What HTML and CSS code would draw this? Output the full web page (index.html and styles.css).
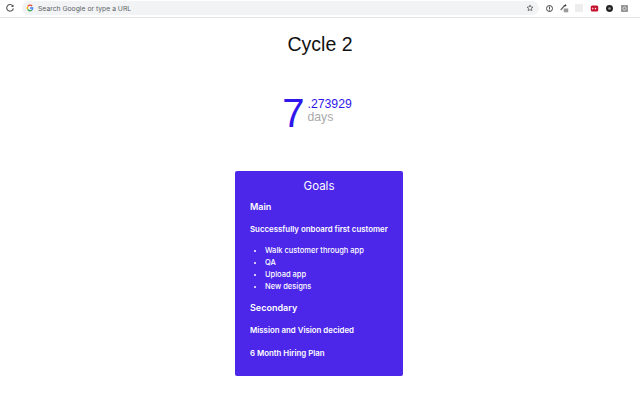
FILE: index.html
```html
<!DOCTYPE html>
<html lang="en">
<head>
<meta charset="UTF-8" />
<title>Cycle 2</title>
<link rel="stylesheet" href="styles.css">
</head>
<body>

<div class="toolbar">
  <svg class="reload" viewBox="0 0 12 12" xmlns="http://www.w3.org/2000/svg">
    <path d="M9.6 4 A4 4 0 1 0 10 6.4" />
    <path class="solid" d="M10.2 1.8 V4.8 H7.2 Z" />
  </svg>
  <div class="omnibox">
    <svg class="glogo" viewBox="0 0 12 12" xmlns="http://www.w3.org/2000/svg">
      <path stroke="#ea4335" d="M9.2 3 A4 4 0 0 0 2.6 3.8" />
      <path stroke="#fbbc05" d="M2.6 3.8 A4 4 0 0 0 2.6 8.2" />
      <path stroke="#34a853" d="M2.6 8.2 A4 4 0 0 0 9 8.8" />
      <path stroke="#4285f4" d="M9 8.8 A4 4 0 0 0 10 6 H6" />
    </svg>
    <span class="omnibox-text">Search Google or type a URL</span>
    <svg class="star" viewBox="0 0 12 12" xmlns="http://www.w3.org/2000/svg">
      <path d="M6 1.5 L7.3 4.5 L10.5 4.8 L8.1 6.9 L8.8 10 L6 8.4 L3.2 10 L3.9 6.9 L1.5 4.8 L4.7 4.5 Z" />
    </svg>
  </div>
  <div class="extensions">
    <svg class="ext" viewBox="0 0 12 12" xmlns="http://www.w3.org/2000/svg">
      <circle cx="6" cy="6" r="4" fill="none" stroke="#333" stroke-width="1.2" />
      <rect x="5.4" y="3.4" width="1.2" height="3.4" fill="#333" />
      <rect x="5.4" y="7.6" width="1.2" height="1.2" fill="#333" />
    </svg>
    <svg class="ext" viewBox="0 0 12 12" xmlns="http://www.w3.org/2000/svg">
      <path d="M1 8 L6 2" stroke="#666" stroke-width="1.6" />
      <path d="M6 3 L8 1" stroke="#222" stroke-width="2" />
      <rect x="5" y="6" width="6" height="5" fill="#999" />
    </svg>
    <span class="ext-box"></span>
    <svg class="ext" viewBox="0 0 12 12" xmlns="http://www.w3.org/2000/svg">
      <rect x="1" y="2" width="10" height="8" rx="2" fill="#c4122f" />
      <path d="M3 4.5 L5 6 L3 7.5 Z M6.5 4.5 L8.5 6 L6.5 7.5 Z" fill="#fff" />
    </svg>
    <svg class="ext" viewBox="0 0 12 12" xmlns="http://www.w3.org/2000/svg">
      <circle cx="6" cy="6" r="4.6" fill="#222" />
      <circle cx="6" cy="6" r="1.8" fill="#999" />
    </svg>
    <svg class="ext" viewBox="0 0 12 12" xmlns="http://www.w3.org/2000/svg">
      <rect x="1.5" y="1.5" width="9" height="9" fill="#8a8a8a" />
      <circle cx="6" cy="6" r="2.2" fill="none" stroke="#eee" stroke-width="1.1" />
    </svg>
  </div>
</div>

<div class="page">
  <h1 class="title">Cycle 2</h1>

  <div class="counter">
    <span class="count-big">7</span>
    <div class="count-side">
      <span class="count-frac">.273929</span>
      <span class="count-unit">days</span>
    </div>
  </div>

  <div class="goals">
    <h2 class="goals-title">Goals</h2>
    <h3 class="goals-head">Main</h3>
    <p class="goal">Successfully onboard first customer</p>
    <ul class="goal-list">
      <li>Walk customer through app</li>
      <li>QA</li>
      <li>Upload app</li>
      <li>New designs</li>
    </ul>
    <h3 class="goals-head">Secondary</h3>
    <p class="goal">Mission and Vision decided</p>
    <p class="goal">6 Month Hiring Plan</p>
  </div>
</div>

</body>
</html>
```

FILE: styles.css
```css
body {
  margin: 0;
  background: #fff;
  font-family: "Inter", "Liberation Sans", sans-serif;
}

/* barra del browser */
.toolbar {
  display: flex;
  align-items: center;
  height: 16px;
  padding-bottom: 1px;
  border-bottom: 1px solid #e4e4e4;
  box-sizing: content-box;
}

.reload {
  width: 10px;
  height: 10px;
  margin-left: 5px;
  fill: none;
  stroke: #555;
  stroke-width: 1.3;
}

.reload .solid {
  fill: #555;
  stroke: none;
}

.omnibox {
  display: flex;
  align-items: center;
  width: 517px;
  height: 14px;
  margin-left: 7px;
  padding: 0 5px 0 4px;
  box-sizing: border-box;
  background: #f1f3f4;
  border-radius: 7px;
}

.glogo {
  width: 8px;
  height: 8px;
  fill: none;
  stroke-width: 2;
}

.omnibox-text {
  flex-grow: 1;
  margin-left: 4px;
  font-size: 6.8px;
  color: #5f6368;
}

.star {
  width: 8px;
  height: 8px;
  fill: none;
  stroke: #444;
  stroke-width: 1;
}

.extensions {
  display: flex;
  align-items: center;
  gap: 6.2px;
  margin-left: 6px;
}

.ext {
  width: 9px;
  height: 9px;
}

.ext-box {
  width: 8px;
  height: 8px;
  background: #ededed;
}

/* contenuto */
.page {
  display: flex;
  flex-direction: column;
  align-items: center;
}

.title {
  margin: 15px 0 0;
  font-family: "Liberation Sans", sans-serif;
  font-size: 19.5px;
  font-weight: 400;
  line-height: 23px;
  color: #111;
}

.counter {
  display: flex;
  align-items: center;
  gap: 3px;
  margin: 37px 6px 0 0;
  height: 40px;
}

.count-big {
  font-family: "Liberation Sans", sans-serif;
  font-size: 40px;
  line-height: 40px;
  color: #2f16ea;
}

.count-side {
  display: flex;
  flex-direction: column;
  margin-top: -4px;
  font-family: "Liberation Sans", sans-serif;
  font-size: 12.25px;
  line-height: 13px;
}

.count-frac {
  color: #2f16ea;
}

.count-unit {
  color: #aaa;
}

.goals {
  width: 168px;
  height: 205px;
  margin: 38px 2px 0 0;
  padding: 8px 10px 0 15px;
  box-sizing: border-box;
  background: #4c27ea;
  border-radius: 2px;
  color: #fff;
}

.goals-title {
  margin: 0 5px 0 0;
  font-size: 11.5px;
  font-weight: 400;
  line-height: 15px;
  text-align: center;
}

.goals-head {
  margin: 7px 0 0;
  font-size: 9px;
  font-weight: 600;
  line-height: 12px;
}

.goal {
  margin: 11px 0 0;
  font-size: 7.85px;
  font-weight: 600;
  line-height: 12px;
}

.goals-head + .goal {
  margin-top: 10px;
}

.goal-list {
  margin: 10px 0 0;
  padding-left: 15px;
  font-size: 7.5px;
  font-weight: 500;
  line-height: 12px;
}

.goal-list + .goals-head {
  margin-top: 9px;
}
```
